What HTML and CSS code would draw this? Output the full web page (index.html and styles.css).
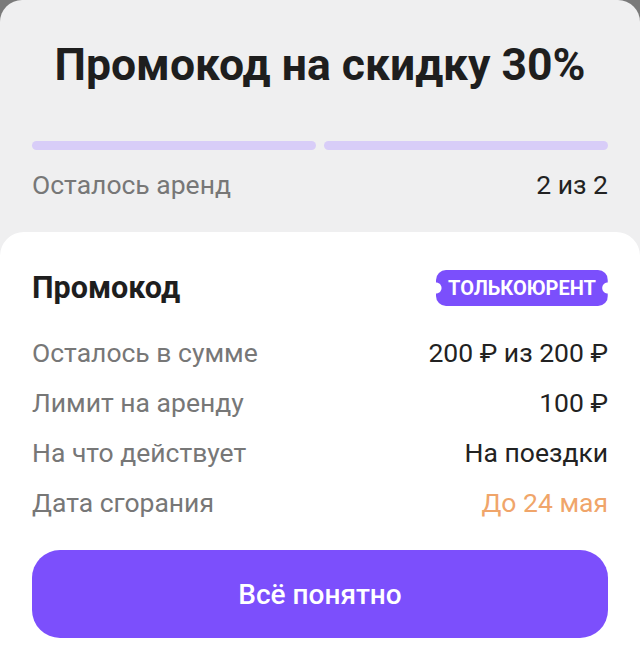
FILE: index.html
```html
<!DOCTYPE html>
<html lang="ru">
<head>
    <meta charset="UTF-8">
    <title>Промокод</title>
    <meta name="viewport" content="width=device-width, initial-scale=1">
    <link rel="stylesheet" href="styles.css">
</head>
<body>
<div class="sheet">
    <h1 class="title">Промокод на скидку 30%</h1>
    <div class="bars">
        <div class="bar"></div>
        <div class="bar"></div>
    </div>
    <div class="row top-row">
        <span class="label">Осталось аренд</span>
        <span class="value">2 из 2</span>
    </div>

    <div class="card">
        <div class="card-head">
            <h2>Промокод</h2>
            <span class="badge">ТОЛЬКОЮРЕНТ</span>
        </div>
        <div class="row">
            <span class="label">Осталось в сумме</span>
            <span class="value">200 ₽ из 200 ₽</span>
        </div>
        <div class="row">
            <span class="label">Лимит на аренду</span>
            <span class="value">100 ₽</span>
        </div>
        <div class="row">
            <span class="label">На что действует</span>
            <span class="value">На поездки</span>
        </div>
        <div class="row">
            <span class="label">Дата сгорания</span>
            <span class="value expire">До 24 мая</span>
        </div>
        <button class="btn">Всё понятно</button>
    </div>
</div>
</body>
</html>
```

FILE: styles.css
```css
html, body {
    margin: 0;
    height: 100%;
}

body {
    font-family: Roboto, "Noto Sans", sans-serif;
    background-color: #7a7a7a;
    color: #222222;
    overflow: hidden;
}

.sheet {
    background-color: #efeff0;
    border-radius: 22px 22px 0 0;
    height: 100%;
    display: flex;
    flex-direction: column;
}

.title {
    margin: 37px 0 0 0;
    font-size: 44.5px;
    line-height: 56px;
    font-weight: 700;
    text-align: center;
    color: #1e1e1e;
}

.bars {
    display: flex;
    gap: 8px;
    margin: 48px 32px 0 32px;
}

.bar {
    flex: 1;
    height: 9px;
    border-radius: 5px;
    background-color: #d8cdf8;
}

.row {
    display: flex;
    justify-content: space-between;
    align-items: center;
    font-size: 26.5px;
    line-height: 50px;
}

.top-row {
    margin: 10px 32px 0 32px;
}

.label {
    color: #777777;
}

.value {
    color: #222222;
}

.expire {
    color: #f0a56a;
}

.card {
    flex: 1;
    margin-top: 22px;
    background-color: #ffffff;
    border-radius: 24px 24px 0 0;
    padding: 36px 32px 0 32px;
}

.card-head {
    display: flex;
    justify-content: space-between;
    align-items: center;
    margin-bottom: 20px;
}

.card-head h2 {
    margin: 0;
    font-size: 30.5px;
    line-height: 40px;
    font-weight: 700;
    color: #1e1e1e;
}

.badge {
    display: inline-block;
    padding: 0 12px;
    height: 36px;
    line-height: 36px;
    border-radius: 10px;
    font-size: 20px;
    font-weight: 700;
    color: #ffffff;
    background:
        radial-gradient(circle at left center, transparent 5px, #7b4ffc 6px) left / 51% 100% no-repeat,
        radial-gradient(circle at right center, transparent 5px, #7b4ffc 6px) right / 51% 100% no-repeat;
}

.btn {
    display: block;
    width: 100%;
    height: 88px;
    margin-top: 22px;
    border: none;
    border-radius: 28px;
    background-color: #7c4ffc;
    color: #ffffff;
    font-family: Roboto, "Noto Sans", sans-serif;
    font-size: 28px;
    font-weight: 500;
    cursor: pointer;
}
```
